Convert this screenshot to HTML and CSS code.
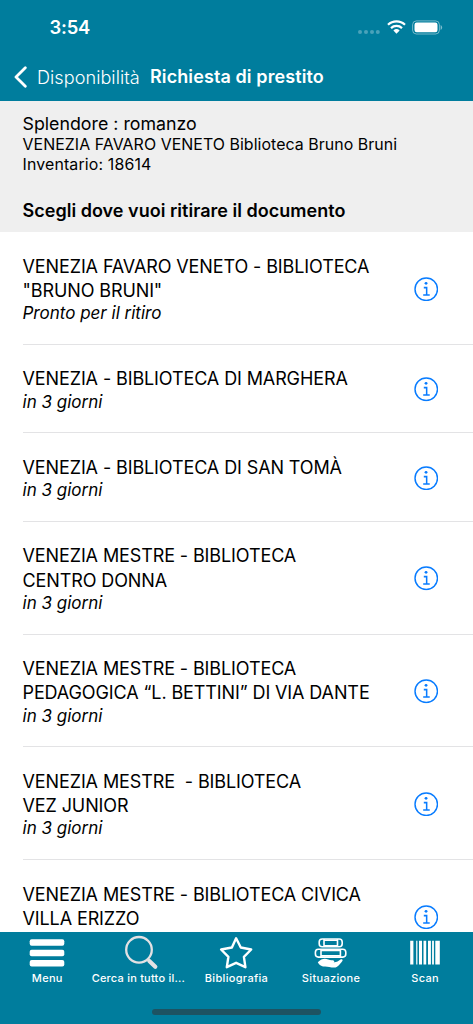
FILE: index.html
```html
<!DOCTYPE html>
<html lang="it">
<head>
<meta charset="utf-8">
<title>Richiesta di prestito</title>
<link rel="stylesheet" href="styles.css">
</head>
<body>
<svg class="defs" aria-hidden="true">
  <symbol id="info" viewBox="0 0 24 24">
    <circle cx="12" cy="12" r="11" fill="none" stroke="currentColor" stroke-width="1.4"/>
    <circle cx="11.8" cy="6.2" r="1.4" fill="currentColor"/>
    <path d="M9.6 10.4h2.8v7.3M9 17.7h6.4" fill="none" stroke="currentColor" stroke-width="1.5"/>
  </symbol>
</svg>
<div class="screen">
  <header class="header">
    <div class="status">
      <span class="time">3:54</span>
      <div class="indicators">
        <svg width="22" height="4" viewBox="0 0 22 4" class="cell"><circle cx="2" cy="2" r="2"/><circle cx="8" cy="2" r="2"/><circle cx="14" cy="2" r="2"/><circle cx="19.8" cy="2" r="2"/></svg>
        <svg width="19" height="14" viewBox="0 0 19 14" class="wifi"><path d="M1 4.8a12.2 12.2 0 0 1 17 0M4 8.1a8 8 0 0 1 11 0" fill="none" stroke="#fff" stroke-width="2.2"/><path d="M6.4 10.5a4.5 4.5 0 0 1 6.2 0L9.5 13.8z" fill="#fff"/></svg>
        <svg width="31" height="15" viewBox="0 0 31 15" class="battery"><rect x=".6" y=".9" width="26.8" height="13.1" rx="3.8" fill="none" stroke="#fff" stroke-opacity=".45"/><rect x="2.5" y="2.6" width="23" height="9.7" rx="2.2" fill="#fff"/><path d="M28.6 5v5q1.5-.8 1.5-2.5T28.6 5" fill="#fff" fill-opacity=".5"/></svg>
      </div>
    </div>
    <nav class="nav">
      <svg width="13" height="22" viewBox="0 0 13 22"><path d="M11.3 1.8 2 11l9.3 9.2" fill="none" stroke="#fff" stroke-width="2.8" stroke-linecap="round" stroke-linejoin="round"/></svg>
      <span class="back">Disponibilità</span>
      <h1 class="title">Richiesta di prestito</h1>
    </nav>
  </header>
  <section class="summary">
    <div class="book">Splendore : romanzo</div>
    <div class="detail library">VENEZIA FAVARO VENETO Biblioteca Bruno Bruni</div>
    <div class="detail inventory">Inventario: 18614</div>
    <h2 class="prompt">Scegli dove vuoi ritirare il documento</h2>
  </section>
  <main class="list">
    <div class="row"><div class="text"><div class="name">VENEZIA FAVARO VENETO - BIBLIOTECA<br>"BRUNO BRUNI"</div><div class="wait">Pronto per il ritiro</div></div><svg class="info"><use href="#info"/></svg></div>
    <div class="row"><div class="text"><div class="name">VENEZIA - BIBLIOTECA DI MARGHERA</div><div class="wait">in 3 giorni</div></div><svg class="info"><use href="#info"/></svg></div>
    <div class="row"><div class="text"><div class="name">VENEZIA - BIBLIOTECA DI SAN TOMÀ</div><div class="wait">in 3 giorni</div></div><svg class="info"><use href="#info"/></svg></div>
    <div class="row"><div class="text"><div class="name">VENEZIA MESTRE - BIBLIOTECA<br>CENTRO DONNA</div><div class="wait">in 3 giorni</div></div><svg class="info"><use href="#info"/></svg></div>
    <div class="row"><div class="text"><div class="name">VENEZIA MESTRE - BIBLIOTECA<br>PEDAGOGICA “L. BETTINI” DI VIA DANTE</div><div class="wait">in 3 giorni</div></div><svg class="info"><use href="#info"/></svg></div>
    <div class="row"><div class="text"><div class="name">VENEZIA MESTRE &nbsp;- BIBLIOTECA<br>VEZ JUNIOR</div><div class="wait">in 3 giorni</div></div><svg class="info"><use href="#info"/></svg></div>
    <div class="row"><div class="text"><div class="name">VENEZIA MESTRE - BIBLIOTECA CIVICA<br>VILLA ERIZZO</div><div class="wait"></div></div><svg class="info"><use href="#info"/></svg></div>
  </main>
  <footer class="footer">
    <div class="tabs">
      <div class="tab"><svg width="36" height="36" viewBox="0 0 36 36" fill="#fff"><rect x=".7" y="4.2" width="34.6" height="6.6" rx="2"/><rect x=".7" y="14.8" width="34.6" height="6.4" rx="2"/><rect x=".7" y="25" width="34.6" height="6.6" rx="2"/></svg><span>Menu</span></div>
      <div class="tab"><svg width="36" height="36" viewBox="0 0 36 36" fill="none" stroke="#e3e1e3"><circle cx="15" cy="14.8" r="12.8" stroke-width="2.3"/><path d="m23.5 24 2 2" stroke-width="2.4"/><path d="m25.3 26 6 5.8" stroke-width="4.2" stroke-linecap="round"/></svg><span class="search-label">Cerca in tutto il...</span></div>
      <div class="tab"><svg width="36" height="36" viewBox="0 0 36 36" fill="none" stroke="#fff" stroke-width="2.4" stroke-linejoin="round"><path d="m18.1 3.3 4.7 9.2 10.4 2-7.3 7.3 1.5 10.4-9.3-4.4-9.3 4.4 1.6-10.4-7.3-7.3 10.8-2z"/></svg><span>Bibliografia</span></div>
      <div class="tab"><svg width="36" height="36" viewBox="0 0 36 36" fill="none" stroke="#fff" stroke-width="1.6"><rect x="6.2" y="4" width="23" height="7.8" rx="3"/><path d="M11 4v7.8M24.5 4v7.8M11 5.2h13.5M11 10.7h13.5"/><rect x="2.4" y="14.2" width="30.4" height="7.9" rx="3"/><path d="M8 14.2v7.9M27.4 14.2v7.9M8 15.4h19.4M8 20.9h19.4"/><path d="M4.8 27.2c3.6-3.6 7-4.2 10.4-2.7 2.3 1 4.6.4 5.7 1.2.7.6.4 1.3-.4 1.6 2.6.4 4.8-1.1 7-2.7 1.6-1.1 2.9.2 1.7 1.7-2.6 3.1-4.2 6.3-8 6.3-3.6 0-6.4-1.1-9-1.1-2.4 0-5.6-.7-7.4-4.3z" fill="#fff" stroke="none"/></svg><span>Situazione</span></div>
      <div class="tab"><svg width="36" height="36" viewBox="0 0 36 36" fill="#fff"><path d="M2.2 5.8h3.2v23.8H2.2zM8.2 5.8h1.2v23.8H8.2zM11 5.8h3v23.8h-3zM15.5 5.8h2.7v23.8h-2.7zM20 5.8h2.9v23.8H20zM24.1 5.8h1.8v23.8h-1.8zM27.3 5.8h4.5v23.8h-4.5z"/></svg><span class="scan-label">Scan</span></div>
    </div>
    <div class="home"></div>
  </footer>
</div>
</body>
</html>
```
FILE: styles.css
```css
* { box-sizing: border-box; }
body { margin: 0; font-family: Inter, "Liberation Sans", sans-serif; color: #000; }
.defs { display: none; }
.screen { display: flex; flex-direction: column; height: 1024px; overflow: hidden; background: #fff; }
.header { flex: none; height: 101px; background: #007d9d; color: #fff; }
.status { display: flex; justify-content: space-between; height: 54px; padding: 0 30px 0 49.5px; }
.time { padding-top: 16px; font-size: 18.4px; line-height: 22px; font-weight: 600; letter-spacing: -.2px; }
.indicators { display: flex; padding-top: 20px; }
.cell { margin: 10px 7px 0 0; fill: #4aa2ba; }
.wifi { margin-right: 6px; }
.nav { display: flex; align-items: center; height: 45px; padding-left: 14px; }
.back { margin-left: 10px; width: 113px; white-space: nowrap; font-size: 18.1px; line-height: 22px; font-weight: 300; letter-spacing: .05px; }
.title { margin: 0; font-size: 18px; line-height: 22px; font-weight: 600; letter-spacing: .1px; white-space: nowrap; }
.summary { flex: none; height: 131px; padding: 12px 22.5px 0; background: #efefef; white-space: nowrap; }
.book { font-size: 17.8px; line-height: 22px; }
.detail { font-size: 15.9px; line-height: 20px; letter-spacing: .06px; }
.inventory { letter-spacing: .15px; }
.prompt { margin: 24.5px 0 0; font-size: 18px; line-height: 22px; font-weight: 600; letter-spacing: .02px; }
.list { flex: 1; min-height: 0; overflow: hidden; padding-left: 22.5px; }
.row { display: flex; align-items: center; justify-content: space-between; padding: 22.5px 35px 20.7px 0; border-bottom: 1px solid #e3e3e5; }
.text { white-space: nowrap; }
.name { font-size: 18px; line-height: 24.3px; letter-spacing: -.11px; }
.wait { height: 20px; font-size: 17px; line-height: 20px; font-style: italic; }
.info { flex: none; width: 24.5px; height: 24.5px; color: #087cff; }
.footer { flex: none; height: 92px; background: #007d9d; color: #fff; }
.tabs { display: flex; justify-content: space-between; padding-top: 3px; height: 77px; }
.tab { width: 94.6px; display: flex; flex-direction: column; align-items: center; font-size: 11px; line-height: 15px; font-weight: 500; letter-spacing: .33px; white-space: nowrap; }
.search-label { letter-spacing: .22px; margin-right: 7px; }
.scan-label { margin-right: 1px; }
.home { width: 169px; height: 5.5px; margin: 0 auto; border-radius: 3px; background: #1d5362; }
```
